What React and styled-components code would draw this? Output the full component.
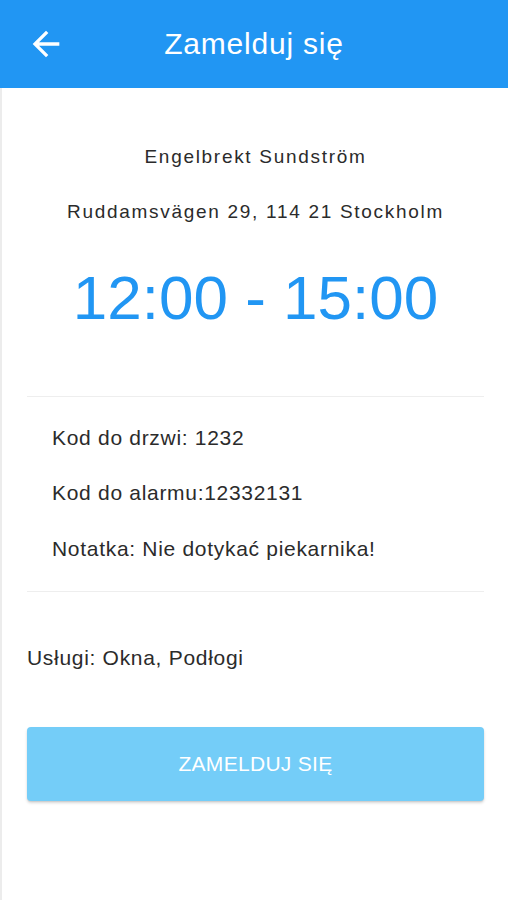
import styled, { createGlobalStyle } from "styled-components";

const Global = createGlobalStyle`
  body {
    margin: 0;
    background: #fff;
    font-family: "Liberation Sans", Arial, sans-serif;
  }
`;

const Page = styled.div`
  width: 508px;
  min-height: 900px;
  display: flex;
  flex-direction: column;
`;

const Header = styled.header`
  height: 88px;
  background: #2196f3;
  display: grid;
  grid-template-columns: 1fr auto 1fr;
  align-items: center;
  color: #fff;
`;

const BackBtn = styled.button`
  justify-self: start;
  margin-left: 26px;
  padding: 0;
  border: none;
  background: none;
  display: flex;
  cursor: pointer;
`;

const Title = styled.h1`
  margin: 0;
  font-size: 30px;
  font-weight: 400;
  letter-spacing: 0.8px;
`;

const Body = styled.main`
  flex: 1;
  border-left: 2px solid #ececec;
  padding: 0 24px 0 25px;
  display: flex;
  flex-direction: column;
`;

const Info = styled.div`
  text-align: center;
  color: #2b2b2b;
  font-size: 19px;
  line-height: 28px;
  letter-spacing: 1.7px;
  margin-top: ${(p) => p.top}px;
`;

const Time = styled.div`
  margin-top: 36px;
  text-align: center;
  color: #2196f3;
  font-size: 62px;
  line-height: 72px;
`;

const Divider = styled.hr`
  margin: ${(p) => p.top}px 0 0;
  border: none;
  border-top: 1px solid #eeeeee;
`;

const Detail = styled.div`
  margin-top: ${(p) => p.top}px;
  padding-left: ${(p) => (p.inset ? 25 : 0)}px;
  color: #2b2b2b;
  font-size: 21px;
  line-height: 30px;
  letter-spacing: 0.7px;
`;

const Submit = styled.button`
  margin-top: 54px;
  height: 74px;
  border: none;
  border-radius: 4px;
  background: #74cdf8;
  color: #fff;
  font-family: inherit;
  font-size: 21px;
  letter-spacing: 0.3px;
  text-transform: uppercase;
  box-shadow: 0 2px 3px rgba(0, 0, 0, 0.16), 0 1px 1px rgba(0, 0, 0, 0.06);
  cursor: pointer;
`;

function ArrowBack() {
  return (
    <svg width="40" height="40" viewBox="0 0 24 24" fill="#fff">
      <path d="M20 11H7.83l5.59-5.59L12 4l-8 8 8 8 1.41-1.41L7.83 13H20v-2z" />
    </svg>
  );
}

export default function App() {
  return (
    <>
      <Global />
      <Page>
        <Header>
          <BackBtn aria-label="back">
            <ArrowBack />
          </BackBtn>
          <Title>Zamelduj się</Title>
          <span />
        </Header>
        <Body>
          <Info top={55}>Engelbrekt Sundström</Info>
          <Info top={27}>Ruddamsvägen 29, 114 21 Stockholm</Info>
          <Time>12:00 - 15:00</Time>
          <Divider top={62} />
          <Detail inset top={26}>Kod do drzwi: 1232</Detail>
          <Detail inset top={25}>Kod do alarmu:12332131</Detail>
          <Detail inset top={26}>Notatka: Nie dotykać piekarnika!</Detail>
          <Divider top={27} />
          <Detail top={51}>Usługi: Okna, Podłogi</Detail>
          <Submit>Zamelduj się</Submit>
        </Body>
      </Page>
    </>
  );
}
